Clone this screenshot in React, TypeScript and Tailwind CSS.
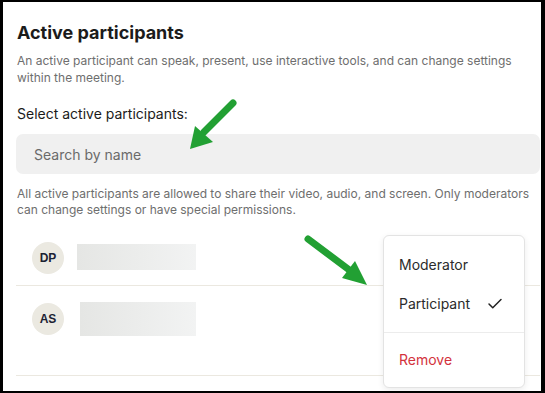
import { Check } from "lucide-react";

const participants = [
  { id: 1, initials: "DP", barClass: "ml-[13px] h-[26px] w-[119px]", rowClass: "h-[56px] items-center" },
  { id: 2, initials: "AS", barClass: "ml-[16px] h-[34px] w-[116px]", rowClass: "h-[90px] items-start pt-[17px]" },
];

const Arrow = ({ d, head }: { d: string; head: string }) => (
  <g>
    <path d={d} stroke="#22a033" strokeWidth={7} strokeLinecap="round" fill="none" />
    <polygon points={head} fill="#22a033" />
  </g>
);

const App = () => {
  return (
    <div className="relative w-[545px] h-[393px] overflow-hidden bg-black p-[2px_4px_2px_3px] font-['Inter',sans-serif]">
      <div className="h-full w-full bg-white pl-[13px] pr-[1px] pt-[19px]">
        <h1 className="text-[18px] leading-[24px] font-bold text-[#1b1b1b] pl-[1px]">Active participants</h1>
        <p className="mt-[7px] text-[12px] leading-[17px] text-[#6e6e6e] pl-[1px]">
          An active participant can speak, present, use interactive tools, and can change settings within the meeting.
        </p>
        <p className="mt-[18px] text-[14px] leading-[20px] text-[#1b1b1b] pl-[1px]">Select active participants:</p>
        <div className="mt-[10px] h-[40px] rounded-[7px] bg-[#f0f0f0] flex items-center pl-[18px] text-[14px] text-[#6a6a6a]">
          Search by name
        </div>
        <p className="mt-[12px] text-[12px] leading-[16px] text-[#6e6e6e] pl-[1px]">
          All active participants are allowed to share their video, audio, and screen. Only moderators can change settings or have special permissions.
        </p>
        <div className="mt-[12px]">
          {participants.map((p) => (
            <div key={p.id} className={`flex border-b border-[#ebe8e0] pl-[16px] ${p.rowClass}`}>
              <div className="w-[32px] h-[32px] rounded-full bg-[#ebe9e1] flex items-center justify-center text-[12px] font-bold text-[#1c2233] font-['Liberation_Sans',sans-serif]">
                {p.initials}
              </div>
              <div className={`bg-gradient-to-r from-[#e5e6e4] to-[#f2f3f3] mt-[-1px] ${p.barClass}`} />
            </div>
          ))}
        </div>
      </div>

      {/* role menu */}
      <div className="absolute left-[383px] top-[235px] w-[142px] h-[153px] rounded-[6px] border border-[#e3e3e3] bg-white shadow-[0_2px_6px_rgba(0,0,0,0.08)] text-[14px] text-[#2b2b2b]">
        <div className="h-[56px] flex items-center pl-[15px]">Moderator</div>
        <div className="h-[40px] flex items-start justify-between pl-[15px] pr-[20px] pt-[1px]">
          <span className="leading-[22px]">Participant</span>
          <Check className="w-[18px] h-[18px] mt-[2px] text-[#222]" strokeWidth={2} />
        </div>
        <div className="border-t border-[#ececec]" />
        <div className="h-[52px] flex items-center pl-[15px] text-[#d3323c]">Remove</div>
      </div>

      {/* annotation arrows */}
      <svg className="absolute left-0 top-0 pointer-events-none" width={545} height={393}>
        <Arrow d="M233 103 L204 132" head="190,149 195,126 213,142" />
        <Arrow d="M308 239 L352 272" head="367,285 342,278 355,261" />
      </svg>
    </div>
  );
};

export default App;
